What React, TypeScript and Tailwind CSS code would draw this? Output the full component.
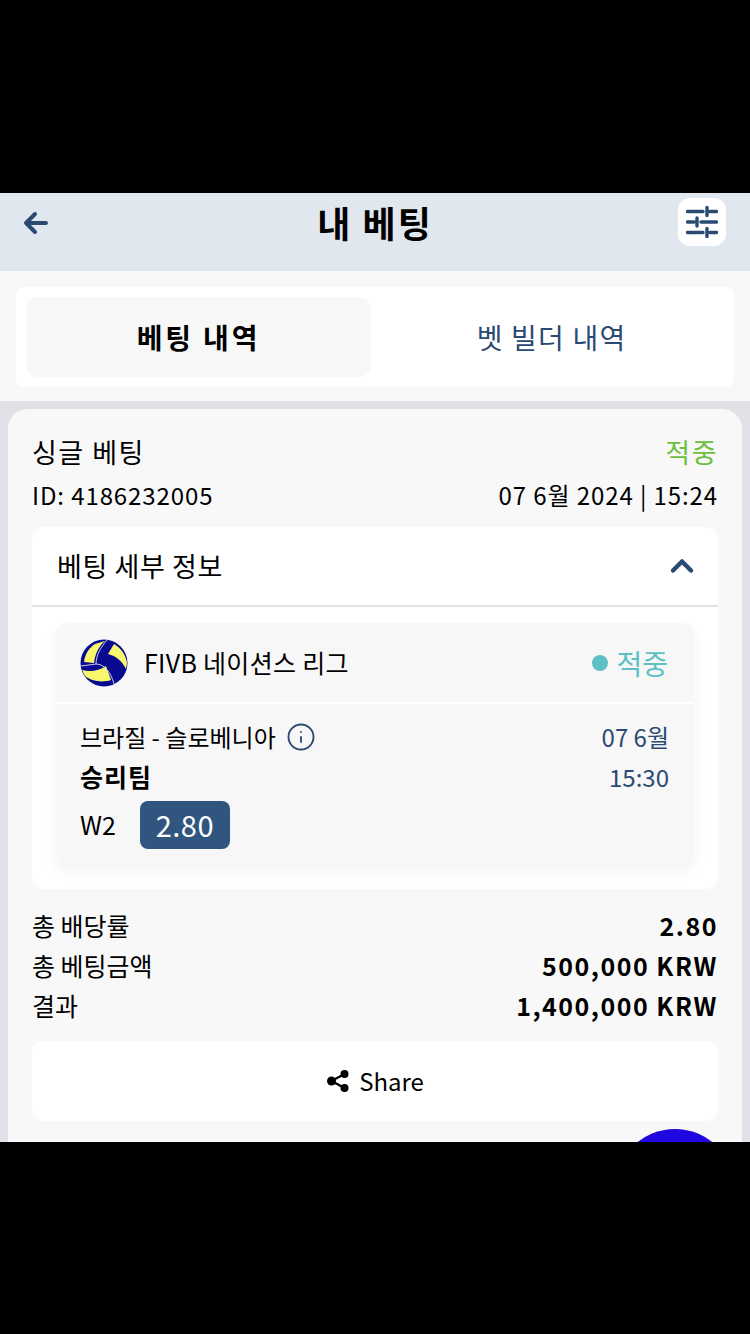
import { ChevronUp, Info } from 'lucide-react';

function VolleyballLogo() {
  return (
    <svg viewBox="0 0 48 48" className="w-12 h-12 shrink-0">
      <circle cx="24" cy="24" r="23.5" fill="#0a0a90" />
      <path d="M15 5 L25 2 C18 8 15 16 14 24 L4 23 C5 15 9 9 15 5 Z" fill="#f8f86c" />
      <path d="M28 15 L34 5 C41 9 46 16 47 24 L46 30 C42 22 36 17 28 15 Z" fill="#f8f86c" />
      <path d="M2 31 C10 33 19 32 26 27 L31 41 C22 44 11 42 5 37 Z" fill="#f8f86c" />
      <path d="M27 1 C21 8 16 16 16 25 L1 27" fill="none" stroke="#c9cbe6" strokeWidth="1" />
      <path d="M16 25 C24 25 31 33 34 45" fill="none" stroke="#c9cbe6" strokeWidth="1" />
    </svg>
  );
}

function ShareGlyph() {
  return (
    <svg viewBox="0 0 24 24" className="w-6 h-6" fill="#000000">
      <circle cx="18.5" cy="5" r="4" />
      <circle cx="18.5" cy="19" r="4" />
      <circle cx="5.5" cy="12" r="4.5" />
      <path d="M5.5 12 L18.5 5 M5.5 12 L18.5 19" stroke="#000000" strokeWidth="2.2" />
    </svg>
  );
}

function FilterGlyph() {
  return (
    <svg viewBox="0 0 32 32" className="w-8 h-8" fill="none" stroke="#2a4a72" strokeWidth="3.4" strokeLinecap="round">
      <path d="M1.5 5.5 H17 M24 5.5 H30.5 M21 1.5 V9.5" />
      <path d="M1.5 16 H8 M15 16 H30.5 M11 12 V20" />
      <path d="M1.5 26.5 H17 M24 26.5 H30.5 M21 22.5 V30.5" />
    </svg>
  );
}

export default function App() {
  const totals = [
    { label: '총 배당률', value: '2.80' },
    { label: '총 베팅금액', value: '500,000 KRW' },
    { label: '결과', value: '1,400,000 KRW' },
  ];

  return (
    <div className="h-[1334px] bg-black overflow-hidden font-['Noto_Sans_CJK_KR','Noto_Sans',sans-serif] text-black">
      <div className="h-[193px]" />
      <main className="relative h-[949px] overflow-hidden bg-[#e0e2e8]">
        <header className="relative h-[78px] bg-[#e0e7ee] flex justify-between items-start pl-[23px] pr-6 pt-[5px]">
          <svg viewBox="0 0 26 24" className="w-[26px] h-6 mt-[13px]" fill="none" stroke="#2a4a72" strokeWidth="4" strokeLinecap="round" strokeLinejoin="round">
            <path d="M23 12 H3 M12 3 L3 12 L12 21" />
          </svg>
          <h1 className="absolute left-0 right-0 top-[4px] text-center text-[36px] leading-[50px] font-bold tracking-[2px]">내 베팅</h1>
          <div className="w-[48px] h-[48px] rounded-xl bg-white flex items-center justify-center">
            <FilterGlyph />
          </div>
        </header>

        <div className="h-[130px] bg-[#f8f8f8] px-4 py-4">
          <div className="h-[100px] bg-white rounded-lg p-[10px] flex">
            <div className="w-[345px] h-20 rounded-xl bg-[#f7f7f8] flex items-center justify-center text-[28px] font-bold tracking-[2.8px]">베팅 내역</div>
            <div className="flex-1 pl-2 flex items-center justify-center text-[28px] tracking-[1.2px] text-[#2a4a72]">벳 빌더 내역</div>
          </div>
        </div>

        <section className="mx-2 mt-2 h-[760px] rounded-[20px] bg-[#f8f8f8] px-6 pt-6">
          <div className="flex justify-between items-center h-[38px] text-[27px] tracking-[1.5px]">
            <span>싱글 베팅</span>
            <span className="text-[#6cbf3f]">적중</span>
          </div>
          <div className="flex justify-between items-center h-[48px] text-[24px] tracking-[0.9px]">
            <span>ID: 4186232005</span>
            <span>07 6월 2024 | 15:24</span>
          </div>

          <div className="mt-2 h-[362px] rounded-xl bg-white">
            <div className="h-[80px] border-b-2 border-[#e0e2e8] pl-[25px] pr-[18px] flex justify-between items-center text-[27px] tracking-[0.6px]">
              <span>베팅 세부 정보</span>
              <ChevronUp className="w-9 h-9 text-[#2a4a72]" strokeWidth={3} />
            </div>
            <div className="mx-6 mt-4 h-[242px] rounded-xl bg-[#f7f7f8] shadow-[0_6px_16px_rgba(0,0,0,0.05)]">
              <div className="h-[81px] border-b-2 border-white pl-6 pr-[26px] flex justify-between items-center">
                <div className="flex items-center gap-4 text-[25px] tracking-[0.3px]">
                  <VolleyballLogo />
                  <span>FIVB 네이션스 리그</span>
                </div>
                <div className="flex items-center gap-2 text-[28px] text-[#5cc0c4]">
                  <span className="w-4 h-4 rounded-full bg-[#5cc0c4]" />
                  <span>적중</span>
                </div>
              </div>
              <div className="pl-6 pr-[25px] pt-[13px] flex justify-between">
                <div>
                  <div className="flex items-center gap-[10px] h-10 text-[24px]">
                    <span>브라질 - 슬로베니아</span>
                    <Info className="w-[30px] h-[30px] text-[#2a4a72]" strokeWidth={1.5} />
                  </div>
                  <div className="h-10 flex items-center text-[25px] font-bold tracking-[1px]">승리팀</div>
                  <div className="flex items-center gap-6 mt-1 text-[25px]">
                    <span>W2</span>
                    <span className="w-[90px] h-12 rounded-lg bg-[#30567f] text-white flex items-center justify-center text-[29px] tracking-[0.5px]">2.80</span>
                  </div>
                </div>
                <div className="text-right text-[24px] text-[#2a4a72]">
                  <div className="h-10 flex items-center justify-end">07 6월</div>
                  <div className="h-10 flex items-center justify-end">15:30</div>
                </div>
              </div>
            </div>
          </div>

          <div className="mt-[17px] flex flex-col">
            {totals.map((row) => (
              <div key={row.label} className="h-10 flex justify-between items-center text-[25px]">
                <span>{row.label}</span>
                <span className="font-bold tracking-[1.5px]">{row.value}</span>
              </div>
            ))}
          </div>

          <div className="mt-[15px] h-20 rounded-xl bg-white flex items-center justify-center gap-[9px] text-[24px]">
            <ShareGlyph />
            <span>Share</span>
          </div>
        </section>

        <div className="absolute right-[15px] top-[936px] w-[120px] h-[120px] rounded-full bg-[#2007e0]" />
      </main>
    </div>
  );
}
